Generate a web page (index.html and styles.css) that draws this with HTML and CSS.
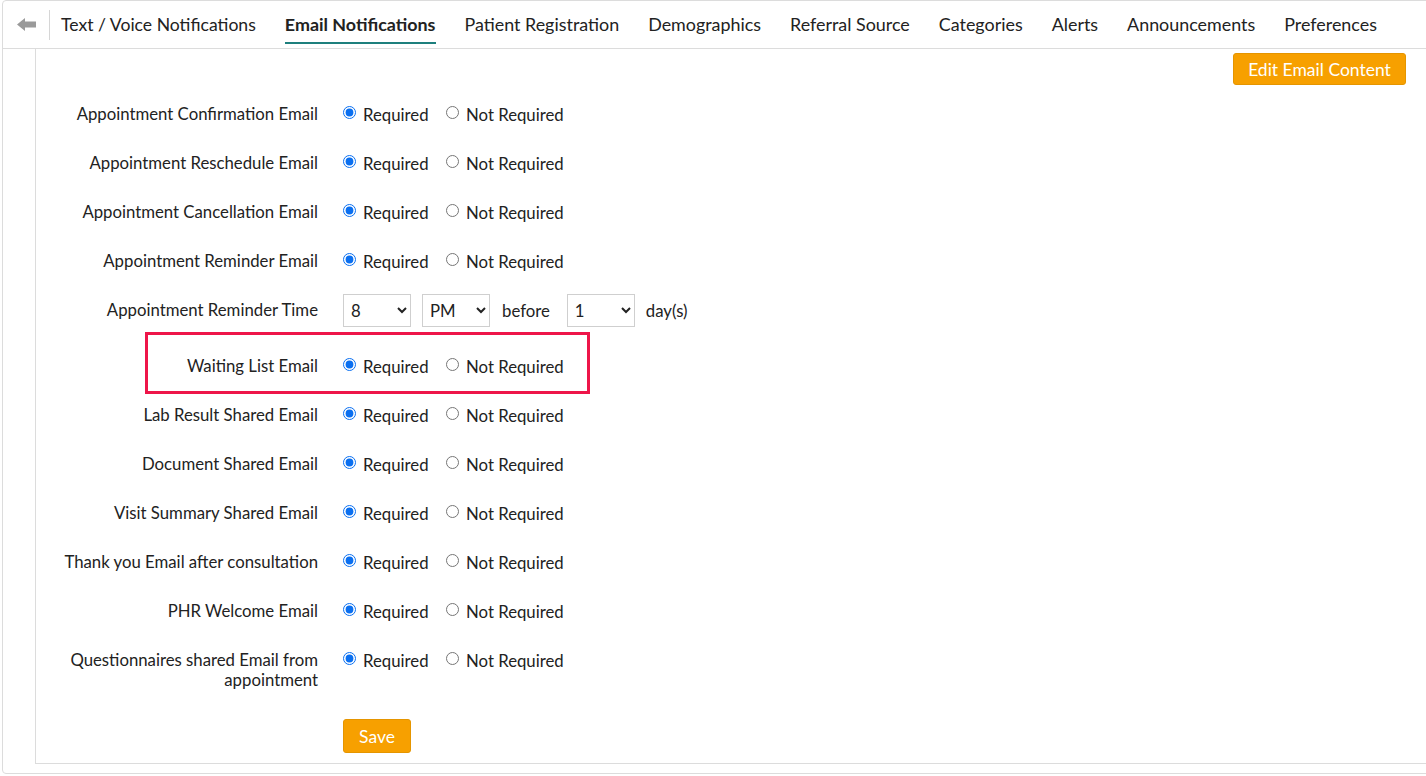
FILE: index.html
```html
<!DOCTYPE html>
<html>
<head>
<meta charset="utf-8">
<link rel="stylesheet" href="styles.css">
</head>
<body>
<div class="frame">
  <div class="tabbar">
    <div class="back">
      <svg width="19" height="13" viewBox="0 0 19 13"><path d="M0 6.5 L8 0 L8 3.5 L19 3.5 L19 9.5 L8 9.5 L8 13 Z" fill="#9a9a9a"/></svg>
    </div>
    <div class="tabs">
      <div class="tab">Text / Voice Notifications</div>
      <div class="tab active">Email Notifications</div>
      <div class="tab">Patient Registration</div>
      <div class="tab">Demographics</div>
      <div class="tab">Referral Source</div>
      <div class="tab">Categories</div>
      <div class="tab">Alerts</div>
      <div class="tab">Announcements</div>
      <div class="tab">Preferences</div>
    </div>
  </div>
  <div class="panel">
    <div class="toolbar"><button class="btn btn-edit">Edit Email Content</button></div>

    <div class="row"><div class="label">Appointment Confirmation Email</div><div class="controls"><label class="opt"><input type="radio" name="r1" checked>Required</label><label class="opt"><input type="radio" name="r1">Not Required</label></div></div>
    <div class="row"><div class="label">Appointment Reschedule Email</div><div class="controls"><label class="opt"><input type="radio" name="r2" checked>Required</label><label class="opt"><input type="radio" name="r2">Not Required</label></div></div>
    <div class="row"><div class="label">Appointment Cancellation Email</div><div class="controls"><label class="opt"><input type="radio" name="r3" checked>Required</label><label class="opt"><input type="radio" name="r3">Not Required</label></div></div>
    <div class="row"><div class="label">Appointment Reminder Email</div><div class="controls"><label class="opt"><input type="radio" name="r4" checked>Required</label><label class="opt"><input type="radio" name="r4">Not Required</label></div></div>
    <div class="row row-time"><div class="label">Appointment Reminder Time</div><div class="controls">
      <select class="sel"><option>8</option></select>
      <select class="sel sel-ampm"><option>PM</option></select>
      <span class="word word-before">before</span>
      <select class="sel sel-days"><option>1</option></select>
      <span class="word word-days">day(s)</span>
    </div></div>
    <div class="row row-hl"><div class="highlight"></div><div class="label">Waiting List Email</div><div class="controls"><label class="opt"><input type="radio" name="r6" checked>Required</label><label class="opt"><input type="radio" name="r6">Not Required</label></div></div>
    <div class="row"><div class="label">Lab Result Shared Email</div><div class="controls"><label class="opt"><input type="radio" name="r7" checked>Required</label><label class="opt"><input type="radio" name="r7">Not Required</label></div></div>
    <div class="row"><div class="label">Document Shared Email</div><div class="controls"><label class="opt"><input type="radio" name="r8" checked>Required</label><label class="opt"><input type="radio" name="r8">Not Required</label></div></div>
    <div class="row"><div class="label">Visit Summary Shared Email</div><div class="controls"><label class="opt"><input type="radio" name="r9" checked>Required</label><label class="opt"><input type="radio" name="r9">Not Required</label></div></div>
    <div class="row"><div class="label">Thank you Email after consultation</div><div class="controls"><label class="opt"><input type="radio" name="r10" checked>Required</label><label class="opt"><input type="radio" name="r10">Not Required</label></div></div>
    <div class="row"><div class="label">PHR Welcome Email</div><div class="controls"><label class="opt"><input type="radio" name="r11" checked>Required</label><label class="opt"><input type="radio" name="r11">Not Required</label></div></div>
    <div class="row"><div class="label">Questionnaires shared Email from appointment</div><div class="controls"><label class="opt"><input type="radio" name="r12" checked>Required</label><label class="opt"><input type="radio" name="r12">Not Required</label></div></div>

    <div class="save-row"><button class="btn btn-save">Save</button></div>
  </div>
</div>
</body>
</html>
```
FILE: styles.css
```css
html, body {
  margin: 0;
  padding: 0;
  background: #fff;
  overflow: hidden;
}
body {
  font-family: Lato, "Liberation Sans", sans-serif;
  color: #222;
}
.frame {
  margin: 0 -12px 0 2px;
  border: 1px solid #dcdcdc;
  border-radius: 4px;
  padding-bottom: 9px;
}
.tabbar {
  display: flex;
  align-items: flex-start;
  height: 47px;
  border-bottom: 1px solid #dcdcdc;
}
.back {
  width: 46px;
  height: 30px;
  margin-top: 9px;
  border-right: 1px solid #d6d6d6;
  display: flex;
  align-items: center;
  justify-content: center;
}
.back svg { display: block; margin-top: -1px; }
.tabs {
  display: flex;
  gap: 29px;
  margin-left: 11px;
}
.tab {
  font-size: 17.9px;
  padding-top: 6px;
  height: 35px;
  line-height: 35px;
  border-bottom: 2px solid transparent;
  color: #222;
  white-space: nowrap;
}
.tab:first-child { font-size: 17.6px; }
.tab.active {
  font-weight: 700;
  border-bottom-color: #1d7f7d;
}
.panel {
  margin-left: 32px;
  border-left: 1px solid #dcdcdc;
  border-bottom: 1px solid #dcdcdc;
  padding: 4px 31px 10px 27px;
}
.toolbar {
  display: flex;
  justify-content: flex-end;
  margin-bottom: 12px;
}
.btn {
  font-family: Lato, "Liberation Sans", sans-serif;
  background: #f7a000;
  color: #fff;
  border: 1px solid #e59500;
  border-radius: 3px;
  cursor: pointer;
}
.btn-edit {
  height: 32px;
  width: 173px;
  font-size: 17.5px;
  padding: 0;
}
.row {
  display: flex;
  align-items: flex-start;
  margin-bottom: 15px;
  position: relative;
}
.label {
  width: 255px;
  flex: none;
  padding: 7px 0;
  line-height: 20px;
  text-align: right;
  font-size: 16.75px;
  margin-right: 25px;
}
.controls {
  height: 34px;
  display: flex;
  align-items: center;
  font-size: 16.75px;
}
.opt {
  display: inline-flex;
  align-items: center;
  margin-right: 17.5px;
  line-height: 20px;
  padding-top: 2px;
}
.opt input {
  margin: 0 7px 0 0;
  width: 13px;
  height: 13px;
  accent-color: #0a6ff0;
  position: relative;
  top: -3px;
}
.row-time { margin-bottom: 22px; }
.sel {
  width: 68px;
  height: 33px;
  border: 1px solid #cfcfcf;
  border-radius: 0;
  background: #fff;
  font-family: Lato, "Liberation Sans", sans-serif;
  font-size: 16.75px;
  color: #222;
  padding: 0 6px 0 3px;
  margin-right: 11px;
}
.word-before { margin-left: 1px; margin-right: 17px; }
.word-days { margin-left: 0; }
.highlight {
  position: absolute;
  left: 82px;
  top: -17px;
  width: 445px;
  height: 62px;
  box-sizing: border-box;
  border: 3px solid #ee1549;
  pointer-events: none;
}
.save-row {
  margin-top: 22px;
  padding-left: 280px;
}
.btn-save {
  width: 68px;
  height: 34px;
  font-size: 17.5px;
  padding: 0;
}
```
